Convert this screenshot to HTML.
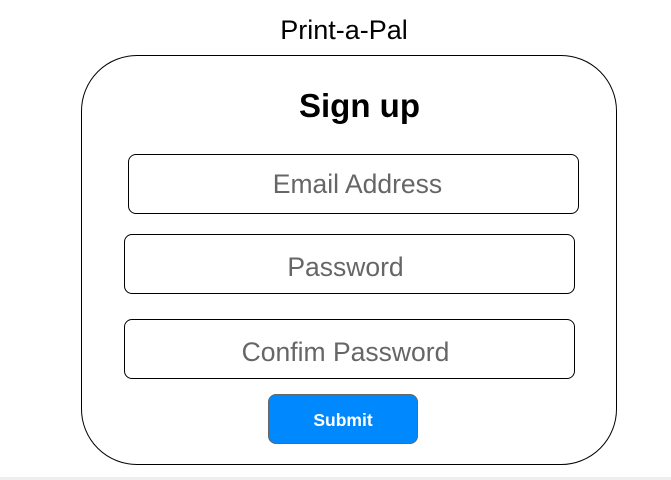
<!DOCTYPE html>
<html><head><style>
body{margin:0;width:671px;height:480px;background:#fff;position:relative;overflow:hidden;font-family:"Liberation Sans",Arial,sans-serif}
.a{position:absolute}
.t{left:0;width:688px;text-align:center;top:15px;font-size:27px;color:#000}
.box{left:81px;top:55px;width:534px;height:408px;border:1px solid #000;border-radius:56px}
.h{left:299px;top:87px;font-size:33px;font-weight:bold}
.in{border:1px solid #000;border-radius:8px;height:58px;line-height:58px;text-align:center;font-size:26.5px;color:#666;width:449px}
.btn{left:268px;top:394px;width:148px;height:48px;background:#0088ff;border:1px solid #666;border-radius:8px;color:#fff;font-weight:bold;font-size:17.5px;text-align:center;line-height:50px}
.bot{left:0;top:477px;width:671px;height:3px;background:#eee}
</style></head><body>
<div class="a t">Print-a-Pal</div>
<div class="a box"></div>
<div class="a h">Sign up</div>
<div class="a in" style="left:128px;top:154px;text-indent:8px">Email Address</div>
<div class="a in" style="left:124px;top:234px;line-height:64px;text-indent:-8px">Password</div>
<div class="a in" style="left:124px;top:319px;line-height:64px;text-indent:-8px">Confim Password</div>
<div class="a btn">Submit</div>
<div class="a bot"></div>
</body></html>
